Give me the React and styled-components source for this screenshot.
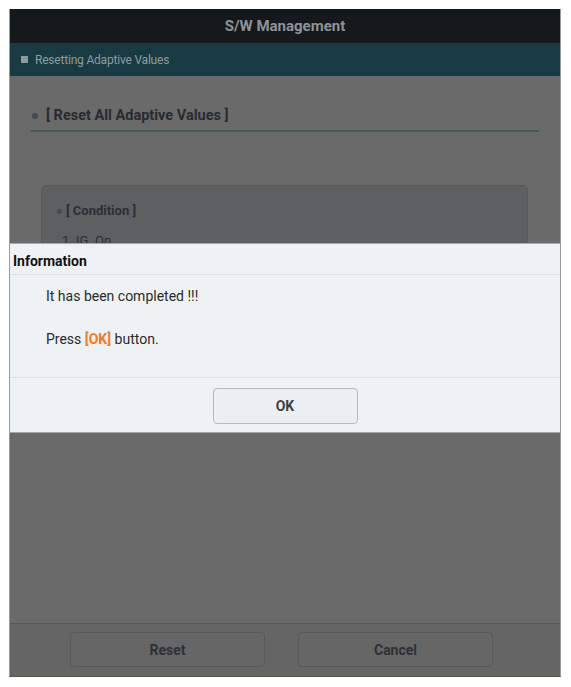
import React from 'react'
import styled, { createGlobalStyle } from 'styled-components'

const GlobalStyle = createGlobalStyle`
  html, body {
    margin: 0;
    padding: 0;
    background: #ffffff;
    font-family: Roboto, "Liberation Sans", Arial, sans-serif;
  }
`

const Screen = styled.div`
  position: relative;
  box-sizing: border-box;
  margin: 9px 0 0 9px;
  width: 552px;
  height: 668px;
  border: 1px solid #9a9a9a;
  border-top: none;
  border-bottom-color: #5c5646;
  display: flex;
  flex-direction: column;
  background: #6a6a6a;
`

const Header = styled.div`
  height: 34px;
  background: #15181d;
  color: #8f9396;
  font-size: 15px;
  font-weight: 700;
  display: flex;
  align-items: center;
  justify-content: center;
`

const SubBar = styled.div`
  height: 33px;
  background: #183b43;
  color: #8c9c9e;
  font-size: 12px;
  letter-spacing: -0.2px;
  display: flex;
  align-items: center;
  gap: 7px;
  padding-left: 11px;
`

const Square = styled.span`
  width: 7px;
  height: 7px;
  background: #8c9c9e;
`

const Content = styled.div`
  flex: 1;
  display: flex;
  flex-direction: column;
  padding: 30px 21px 0 21px;
`

const SectionTitle = styled.div`
  display: flex;
  align-items: center;
  gap: 8px;
  padding: 0 0 4px 1px;
  border-bottom: 2px solid #435859;
  font-size: 14.5px;
  line-height: 20px;
  font-weight: 700;
  color: #272b31;
`

const Dot = styled.span`
  width: ${(p) => p.size || 6}px;
  height: ${(p) => p.size || 6}px;
  border-radius: 50%;
  background: #474a4f;
`

const ConditionBox = styled.div`
  margin: 53px 11px 0 10px;
  padding: 16px 15px;
  height: 180px;
  border-radius: 5px;
  background: #5e5f61;
  border: 1px solid #58595b;
  display: flex;
  flex-direction: column;
  gap: 12px;
`

const ConditionTitle = styled.div`
  display: flex;
  align-items: center;
  gap: 4px;
  font-size: 13px;
  line-height: 18px;
  font-weight: 700;
  color: #2a2e33;
`

const ConditionItem = styled.div`
  font-size: 13px;
  line-height: 18px;
  color: #2a2e33;
  padding-left: 5px;
`

const Footer = styled.div`
  border-top: 1px solid #555759;
  height: 53px;
  box-sizing: border-box;
  display: flex;
  align-items: flex-start;
  gap: 33px;
  padding: 8px 0 0 60px;
  background: #656565;
`

const FooterButton = styled.div`
  width: 195px;
  height: 35px;
  box-sizing: border-box;
  border: 1px solid #58595b;
  border-radius: 4px;
  background: #666666;
  display: flex;
  align-items: center;
  justify-content: center;
  font-size: 14px;
  font-weight: 700;
  color: #2d3136;
`

const Overlay = styled.div`
  position: absolute;
  inset: 0;
  display: flex;
  flex-direction: column;
  justify-content: flex-start;
  padding-top: 234px;
`

const Dialog = styled.div`
  background: #eff2f4;
  border-top: 1px solid #a4a8ac;
  border-bottom: 1px solid #a4a8ac;
  display: flex;
  flex-direction: column;
`

const DialogTitle = styled.div`
  height: 31px;
  box-sizing: border-box;
  padding: 9px 0 0 3px;
  border-bottom: 1px solid #dde1e4;
  font-size: 14px;
  font-weight: 700;
  color: #111111;
`

const DialogBody = styled.div`
  padding: 11px 0 28px 36px;
  border-bottom: 1px solid #dde1e4;
  display: flex;
  flex-direction: column;
  gap: 23px;
`

const Line = styled.div`
  font-size: 14px;
  line-height: 20px;
  color: #2a2a2a;
`

const Highlight = styled.span`
  color: #f47a1f;
  font-weight: 700;
`

const DialogActions = styled.div`
  display: flex;
  justify-content: center;
  padding: 10px 0 8px 0;
`

const OkButton = styled.div`
  width: 145px;
  height: 36px;
  box-sizing: border-box;
  border: 1px solid #b6babe;
  border-radius: 4px;
  background: #eceff1;
  display: flex;
  align-items: center;
  justify-content: center;
  font-size: 14px;
  font-weight: 700;
  color: #3a3f46;
`

export default function App() {
  return (
    <>
      <GlobalStyle />
      <Screen>
        <Header>S/W Management</Header>
        <SubBar>
          <Square />
          Resetting Adaptive Values
        </SubBar>
        <Content>
          <SectionTitle>
            <Dot />
            [ Reset All Adaptive Values ]
          </SectionTitle>
          <ConditionBox>
            <ConditionTitle>
              <Dot size={5} />
              [ Condition ]
            </ConditionTitle>
            <ConditionItem>1. IG. On</ConditionItem>
          </ConditionBox>
        </Content>
        <Footer>
          <FooterButton>Reset</FooterButton>
          <FooterButton>Cancel</FooterButton>
        </Footer>

        <Overlay>
          <Dialog>
            <DialogTitle>Information</DialogTitle>
            <DialogBody>
              <Line>It has been completed !!!</Line>
              <Line>
                Press <Highlight>[OK]</Highlight> button.
              </Line>
            </DialogBody>
            <DialogActions>
              <OkButton>OK</OkButton>
            </DialogActions>
          </Dialog>
        </Overlay>
      </Screen>
    </>
  )
}
